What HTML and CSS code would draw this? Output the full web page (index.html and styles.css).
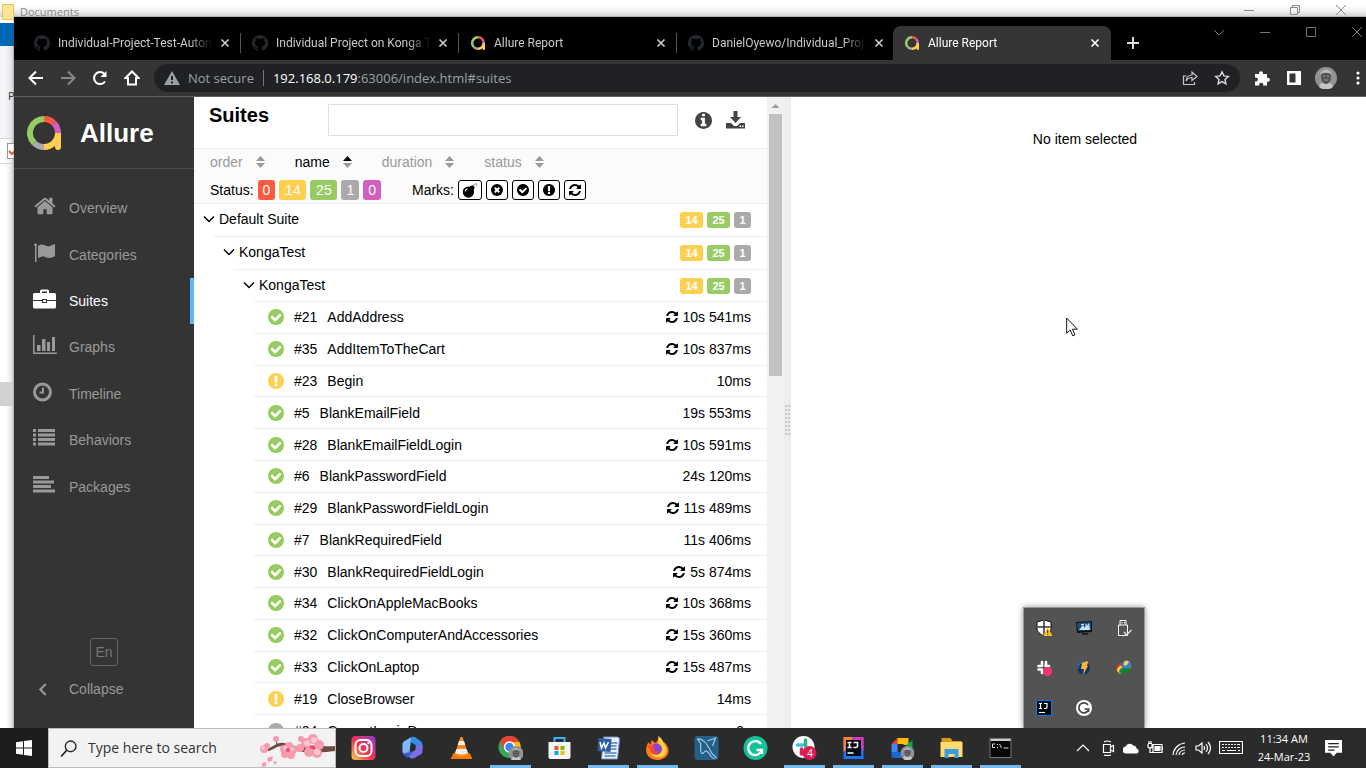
FILE: index.html
```html
<!DOCTYPE html>
<html lang="en">
<head>
<meta charset="utf-8">
<meta name="viewport" content="width=device-width, initial-scale=1">
<title>Allure Report</title>
<link rel="stylesheet" href="styles.css">
</head>
<body>
<svg class="sprite" aria-hidden="true">
  <symbol id="github" viewBox="0 0 16 16"><path d="M8 0C3.58 0 0 3.58 0 8c0 3.54 2.29 6.53 5.47 7.59.4.07.55-.17.55-.38 0-.19-.01-.82-.01-1.49-2.01.37-2.53-.49-2.69-.94-.09-.23-.48-.94-.82-1.13-.28-.15-.68-.52-.01-.53.63-.01 1.08.58 1.23.82.72 1.21 1.87.87 2.33.66.07-.52.28-.87.51-1.07-1.78-.2-3.64-.89-3.64-3.95 0-.87.31-1.59.82-2.15-.08-.2-.36-1.02.08-2.12 0 0 .67-.21 2.2.82a7.6 7.6 0 0 1 4 0c1.53-1.04 2.2-.82 2.2-.82.44 1.1.16 1.92.08 2.12.51.56.82 1.27.82 2.15 0 3.07-1.87 3.75-3.65 3.95.29.25.54.73.54 1.48 0 1.07-.01 1.93-.01 2.2 0 .21.15.46.55.38A8 8 0 0 0 16 8c0-4.42-3.58-8-8-8z"/></symbol>
  <symbol id="allure" viewBox="0 0 34 34"><g fill="none" stroke-width="6"><path stroke="#97cc64" d="M7.100 26.900A14 14 0 0 1 17 3"/><path stroke="#fd5a3e" d="M17 3A14 14 0 0 1 26.900 7.100"/><path stroke="#d35ebe" d="M26.900 7.100A14 14 0 0 1 31 17"/><path stroke="#ffd050" d="M31 17A14 14 0 0 1 17 31"/><path stroke="#aaa" d="M17 31A14 14 0 0 1 7.100 26.900"/></g><path fill="#ffd050" d="M28 17h6v14a3 3 0 0 1-6 0z"/></symbol>
  <symbol id="close" viewBox="0 0 10 10"><path d="M1.500 1.500l7 7M8.500 1.500l-7 7" fill="none" stroke="currentColor" stroke-width="1.700"/></symbol>
  <symbol id="refresh" viewBox="0 0 1792 1792"><path d="M1639 1056q0 5-1 7-64 268-268 434.500t-478 166.500q-146 0-282.500-55t-243.500-157l-129 129q-19 19-45 19t-45-19-19-45v-448q0-26 19-45t45-19h448q26 0 45 19t19 45-19 45l-137 137q71 66 161 102t187 36q134 0 250-65t186-179q11-17 53-117 8-23 30-23h192q13 0 22.500 9.500t9.500 22.500zm25-800v448q0 26-19 45t-45 19h-448q-26 0-45-19t-19-45 19-45l138-138q-148-137-349-137-134 0-250 65t-186 179q-11 17-53 117-8 23-30 23h-199q-13 0-22.500-9.500t-9.500-22.500v-7q65-268 270-434.500t480-166.500q146 0 284 55.500t245 156.500l130-129q19-19 45-19t45 19 19 45z"/></symbol>
  <symbol id="check" viewBox="128 128 1536 1536"><path d="M1412 734q0-28-18-46l-91-90q-19-19-45-19t-45 19l-408 407-226-226q-19-19-45-19t-45 19l-91 90q-18 18-18 46 0 27 18 45l362 362q19 19 45 19 27 0 46-19l543-543q18-18 18-45zm252 162q0 209-103 385.500t-279.500 279.500-385.500 103-385.500-103-279.500-279.500-103-385.500 103-385.500 279.500-279.500 385.500-103 385.500 103 279.500 279.500 103 385.500z"/></symbol>
  <symbol id="warn" viewBox="128 128 1536 1536"><path d="M896 128q209 0 385.500 103t279.500 279.500 103 385.500-103 385.500-279.500 279.500-385.500 103-385.500-103-279.500-279.500-103-385.500 103-385.500 279.500-279.500 385.500-103zm128 1247v-190q0-14-9-23.500t-22-9.500h-192q-13 0-23 10t-10 23v190q0 13 10 23t23 10h192q13 0 22-9.500t9-23.500zm-2-344l18-621q0-12-10-18-10-8-24-8h-220q-14 0-24 8-10 6-10 18l17 621q0 10 10 17.500t24 7.500h185q14 0 23.500-7.500t10.500-17.500z"/></symbol>
  <symbol id="info" viewBox="128 128 1536 1536"><path d="M1152 1376v-160q0-14-9-23t-23-9h-96v-512q0-14-9-23t-23-9h-320q-14 0-23 9t-9 23v160q0 14 9 23t23 9h96v320h-96q-14 0-23 9t-9 23v160q0 14 9 23t23 9h448q14 0 23-9t9-23zm-128-896v-160q0-14-9-23t-23-9h-192q-14 0-23 9t-9 23v160q0 14 9 23t23 9h192q14 0 23-9t9-23zm640 416q0 209-103 385.500t-279.500 279.500-385.500 103-385.500-103-279.500-279.500-103-385.500 103-385.500 279.500-279.500 385.500-103 385.500 103 279.500 279.500 103 385.500z"/></symbol>
  <symbol id="cross" viewBox="0 0 12 12"><circle cx="6" cy="6" r="6"/><path d="M3.800 3.800l4.400 4.400M8.200 3.800L3.800 8.200" stroke="#fff" stroke-width="2"/></symbol>
  <symbol id="down" viewBox="0 0 12 8"><path d="M1 1.500l5 5 5-5" fill="none" stroke="currentColor" stroke-width="1.500"/></symbol>
  <symbol id="face" viewBox="0 0 22 22"><circle cx="11" cy="11" r="11" fill="#929292"/><path d="M4 20c1-4 4-5 7-5s6 1 7 5a11 11 0 0 1-14 0z" fill="#c5c5c5"/><path d="M6 9c0-8 10-8 10 0 0 5-2 8-5 8S6 14 6 9z" fill="#555"/><path d="M5 8c1-7 11-7 12 0-3-3-9-3-12 0z" fill="#bbb"/><path d="M8 9h2M12 9h2M9 13h4" stroke="#999"/></symbol>
</svg>

<div class="desktop">
  <div class="docs">
    <div class="docs-title"><svg class="folder" viewBox="0 0 13 16"><path d="M.5.500h11v10h1v5H.5z" fill="#ffe59a" stroke="#e6c153"/></svg><span>Documents</span>
      <div class="docs-controls">
        <svg viewBox="0 0 12 12"><path d="M1 6.500h10"/></svg>
        <svg viewBox="0 0 12 12"><path d="M1.500 3.500h7v7h-7zM3.500 3.500v-2h7v7h-2"/></svg>
        <svg viewBox="0 0 12 12"><path d="M1 1l10 10M11 1L1 11"/></svg>
      </div>
    </div>
    <div class="docs-side"><div class="docs-blue"></div><div class="docs-ribbon">P</div><div class="docs-path"><svg viewBox="0 0 14 16"><rect x=".5" y=".5" width="13" height="15" fill="#fff" stroke="#999"/><path d="M2 8l3 3 6-6" fill="none" stroke="#e0622a" stroke-width="2"/></svg></div><div class="docs-row"></div></div>
  </div>

  <div class="browser">
    <div class="tabs">
      <div class="tab"><svg class="fav gh"><use href="#github"/></svg><span class="tab-title">Individual-Project-Test-Auton</span><button class="tab-close" aria-label="Close tab"><svg><use href="#close"/></svg></button></div>
      <div class="tab"><svg class="fav gh"><use href="#github"/></svg><span class="tab-title">Individual Project on Konga T</span><button class="tab-close" aria-label="Close tab"><svg><use href="#close"/></svg></button></div>
      <div class="tab"><svg class="fav"><use href="#allure"/></svg><span class="tab-title">Allure Report</span><button class="tab-close" aria-label="Close tab"><svg><use href="#close"/></svg></button></div>
      <div class="tab last"><svg class="fav gh"><use href="#github"/></svg><span class="tab-title">DanielOyewo/Individual_Proj</span><button class="tab-close" aria-label="Close tab"><svg><use href="#close"/></svg></button></div>
      <div class="tab active"><svg class="fav"><use href="#allure"/></svg><span class="tab-title">Allure Report</span><button class="tab-close" aria-label="Close tab"><svg><use href="#close"/></svg></button></div>
      <button class="new-tab" aria-label="New tab"><svg viewBox="0 0 12 12"><path d="M6 0v12M0 6h12" stroke="#ddd" stroke-width="2"/></svg></button>
      <div class="win-controls">
        <button aria-label="Search tabs"><svg viewBox="0 0 12 12"><path d="M1 4l5 5 5-5"/></svg></button>
        <button aria-label="Minimize"><svg viewBox="0 0 12 12"><path d="M1 6.500h10"/></svg></button>
        <button aria-label="Maximize"><svg viewBox="0 0 12 12"><path d="M1.500 1.500h9v9h-9z"/></svg></button>
        <button aria-label="Close"><svg viewBox="0 0 12 12"><path d="M1 1l10 10M11 1L1 11"/></svg></button>
      </div>
    </div>
    <div class="toolbar">
      <button aria-label="Back"><svg viewBox="0 0 16 16"><path d="M15 8H2M8 1.500L1.500 8 8 14.500" fill="none" stroke="#fff" stroke-width="2"/></svg></button>
      <button aria-label="Forward"><svg viewBox="0 0 16 16"><path d="M1 8h13M8 1.500L14.500 8 8 14.500" fill="none" stroke="#888" stroke-width="2"/></svg></button>
      <button aria-label="Reload"><svg viewBox="0 0 16 16"><path d="M13 11.500A6 6 0 1 1 12.500 4" fill="none" stroke="#fff" stroke-width="2"/><path d="M14.500 1v6h-6z" fill="#fff"/></svg></button>
      <button aria-label="Home"><svg viewBox="0 0 16 16"><path d="M8 1.500L1.500 8H4v6.500h8V8h2.500z" fill="none" stroke="#fff" stroke-width="2"/></svg></button>
      <div class="omnibox">
        <svg class="insecure" viewBox="0 0 16 14"><path d="M8 0l8 14H0z" fill="#9aa0a6"/><path d="M8 5v4M8 10.500v2" stroke="#202124" stroke-width="2"/></svg>
        <span class="not-secure">Not secure</span>
        <span class="url"><b>192.168.0.179</b>:63006/index.html#suites</span>
        <svg class="share" viewBox="0 0 16 16"><path d="M4.500 6H1.500v8.500h11V12M4 11c.5-4 3-6 6-6V2l5 4.500-5 4v-3c-2.500 0-4.500 1-6 3.500z" fill="none" stroke="#c4c7c5" stroke-width="1.200"/></svg>
        <svg class="star" viewBox="0 0 16 16"><path d="M8 1.800l1.900 4.100 4.400.5-3.300 3 .9 4.400L8 11.600l-3.900 2.200.9-4.400-3.300-3 4.400-.5z" fill="none" stroke="#dadce0" stroke-width="1.400"/></svg>
      </div>
      <div class="ext">
        <button aria-label="Extensions"><svg viewBox="0 0 16 16"><path d="M1 4h4.200a2 2 0 1 1 3.600 0H13v4a2 2 0 1 1 0 3.600V15.500H9.200a2.100 2.100 0 1 0-4 0H1v-4.200a2 2 0 1 0 0-3.600z" fill="#fff"/></svg></button>
        <button aria-label="Side panel"><svg viewBox="0 0 16 16"><path d="M1 1h14v14H1zM3.500 3.500v9h6v-9z" fill="#fff" fill-rule="evenodd"/></svg></button>
        <button aria-label="Profile"><svg class="avatar"><use href="#face"/></svg></button>
        <button aria-label="Menu"><svg viewBox="0 0 16 16"><g fill="#fff"><circle cx="8" cy="3" r="1.600"/><circle cx="8" cy="8" r="1.600"/><circle cx="8" cy="13" r="1.600"/></g></svg></button>
      </div>
    </div>

    <div class="page">
      <aside class="side">
        <div class="brand"><svg><use href="#allure"/></svg><span>Allure</span></div>
        <nav class="nav">
          <a href="#overview"><svg viewBox="0 128 1792 1536"><path d="M1472 992v480q0 26-19 45t-45 19h-384v-384h-256v384h-384q-26 0-45-19t-19-45v-480q0-1 .5-3t.5-3l575-474 575 474q1 2 1 6zm223-69l-62 74q-8 9-21 11h-3q-13 0-21-7l-692-577-692 577q-12 8-24 7-13-2-21-11l-62-74q-8-10-7-23.500t11-21.500l719-599q32-26 76-26t76 26l244 204v-195q0-14 9-23t23-9h192q14 0 23 9t9 23v408l219 182q10 8 11 21.500t-7 23.500z"/></svg>Overview</a>
          <a href="#categories"><svg viewBox="0 0 24 20"><path d="M1 2a1.500 1.500 0 1 1 2.500 1v16H2V3zM5 3c6-4 8 2 12 0l5-2v12c-5 3-7 2-10 1-2-1-4 0-7 1z"/></svg>Categories</a>
          <a href="#suites" class="on"><svg viewBox="0 0 24 20"><path d="M7 4V2a1.500 1.500 0 0 1 1.500-1.500h6A1.500 1.500 0 0 1 16 2v2h5.500A1.500 1.500 0 0 1 23 5.500V11h-9v-1H9v1H0V5.500A1.500 1.500 0 0 1 1.500 4zM9 4h5V2.500H9zM0 12h9v2h5v-2h9v6a1.500 1.500 0 0 1-1.500 1.500h-20A1.500 1.500 0 0 1 0 18zM10 11h3v2h-3z" fill-rule="evenodd"/></svg>Suites</a>
          <a href="#graphs"><svg viewBox="0 0 24 20"><path d="M0 0h1.500v17.500H24V19H0zM4 10h3.500v6H4zM9 4h3.500v12H9zM14 7h3v9h-3zM19 2h3v14h-3z"/></svg>Graphs</a>
          <a href="#timeline"><svg viewBox="0 0 24 20"><circle cx="9.500" cy="10" r="8" fill="none" stroke="currentColor" stroke-width="3"/><path d="M9 5.500h2v6H6.500v-2H9z"/></svg>Timeline</a>
          <a href="#behaviors"><svg viewBox="0 0 24 20"><path d="M0 1h3v3H0zM5 1h17v3H5zM0 5.500h3v3H0zM5 5.500h17v3H5zM0 10h3v3H0zM5 10h17v3H5zM0 14.500h3v3H0zM5 14.500h17v3H5z"/></svg>Behaviors</a>
          <a href="#packages"><svg viewBox="0 0 24 20"><path d="M0 1h16v3H0zM0 5.500h21v3H0zM0 10h18v3H0zM0 14.500h22v3H0z"/></svg>Packages</a>
        </nav>
        <div class="side-foot"><button class="lang">En</button><button class="collapse"><svg viewBox="0 0 8 12"><path d="M7 1L2 6l5 5" fill="none" stroke="currentColor" stroke-width="2"/></svg>Collapse</button></div>
      </aside>

      <main class="suites">
        <header class="suites-head">
          <h1>Suites</h1>
          <input type="text" aria-label="Search suites">
          <button aria-label="Information"><svg><use href="#info"/></svg></button>
          <button aria-label="Download CSV"><svg class="dl" viewBox="0 0 19 18"><path d="M7.500 0h4v6H15l-5.500 6L4 6h3.500zM0 12h5l3 3h3l3-3h5v5.500H0zM13.500 14.500v1.500H15v-1.500zM16 14.500v1.500h1.500v-1.500z" fill-rule="evenodd"/></svg></button>
        </header>
        <section class="controls">
          <div class="sorters">
            <button>order<svg viewBox="0 0 9 12"><path d="M0 5L4.500 0 9 5z"/><path d="M0 7h9l-4.500 5z"/></svg></button>
            <button class="sorted">name<svg viewBox="0 0 9 12"><path d="M0 5L4.500 0 9 5z"/><path d="M0 7h9l-4.500 5z" fill="#999"/></svg></button>
            <button>duration<svg viewBox="0 0 9 12"><path d="M0 5L4.500 0 9 5z"/><path d="M0 7h9l-4.500 5z"/></svg></button>
            <button>status<svg viewBox="0 0 9 12"><path d="M0 5L4.500 0 9 5z"/><path d="M0 7h9l-4.500 5z"/></svg></button>
          </div>
          <div class="filters">
            <span>Status:</span>
            <button class="chip failed">0</button><button class="chip broken two">14</button><button class="chip passed two">25</button><button class="chip skipped">1</button><button class="chip unknown">0</button>
            <span class="marks">Marks:</span>
            <button class="mark wide" aria-label="Flaky"><svg viewBox="0 0 14 14"><circle cx="6" cy="8.500" r="5.300"/><path d="M7 3l3-1 2 2-1.500 3z"/><path d="M10.500 2.500l1-1.500M12 1h2v2" fill="none" stroke="#888"/><path d="M3 8q0-2 2-2.500" fill="none" stroke="#fff"/></svg></button>
            <button class="mark" aria-label="New failed"><svg><use href="#cross"/></svg></button>
            <button class="mark" aria-label="New passed"><svg><use href="#check"/></svg></button>
            <button class="mark" aria-label="New broken"><svg><use href="#warn"/></svg></button>
            <button class="mark" aria-label="Retries"><svg viewBox="128 128 1536 1536"><use href="#refresh" width="1792" height="1792"/></svg></button>
          </div>
        </section>
        <div class="tree">
          <div class="groups">
            <div class="group l1"><button><svg><use href="#down"/></svg>Default Suite</button><span class="badges"><i class="broken two">14</i><i class="passed two">25</i><i class="skipped">1</i></span></div>
            <div class="group l2"><button><svg><use href="#down"/></svg>KongaTest</button><span class="badges"><i class="broken two">14</i><i class="passed two">25</i><i class="skipped">1</i></span></div>
            <div class="group l3"><button><svg><use href="#down"/></svg>KongaTest</button><span class="badges"><i class="broken two">14</i><i class="passed two">25</i><i class="skipped">1</i></span></div>
          </div>
          <ul class="tests">
            <li><a href="#t21"><svg class="st ok"><use href="#check"/></svg><span>#21</span><span>AddAddress</span><span class="time"><svg><use href="#refresh"/></svg>10s 541ms</span></a></li>
            <li><a href="#t35"><svg class="st ok"><use href="#check"/></svg><span>#35</span><span>AddItemToTheCart</span><span class="time"><svg><use href="#refresh"/></svg>10s 837ms</span></a></li>
            <li><a href="#t23"><svg class="st bad"><use href="#warn"/></svg><span>#23</span><span>Begin</span><span class="time">10ms</span></a></li>
            <li><a href="#t5"><svg class="st ok"><use href="#check"/></svg><span>#5</span><span>BlankEmailField</span><span class="time">19s 553ms</span></a></li>
            <li><a href="#t28"><svg class="st ok"><use href="#check"/></svg><span>#28</span><span>BlankEmailFieldLogin</span><span class="time"><svg><use href="#refresh"/></svg>10s 591ms</span></a></li>
            <li><a href="#t6"><svg class="st ok"><use href="#check"/></svg><span>#6</span><span>BlankPasswordField</span><span class="time">24s 120ms</span></a></li>
            <li><a href="#t29"><svg class="st ok"><use href="#check"/></svg><span>#29</span><span>BlankPasswordFieldLogin</span><span class="time"><svg><use href="#refresh"/></svg>11s 489ms</span></a></li>
            <li><a href="#t7"><svg class="st ok"><use href="#check"/></svg><span>#7</span><span>BlankRequiredField</span><span class="time">11s 406ms</span></a></li>
            <li><a href="#t30"><svg class="st ok"><use href="#check"/></svg><span>#30</span><span>BlankRequiredFieldLogin</span><span class="time"><svg><use href="#refresh"/></svg>5s 874ms</span></a></li>
            <li><a href="#t34"><svg class="st ok"><use href="#check"/></svg><span>#34</span><span>ClickOnAppleMacBooks</span><span class="time"><svg><use href="#refresh"/></svg>10s 368ms</span></a></li>
            <li><a href="#t32"><svg class="st ok"><use href="#check"/></svg><span>#32</span><span>ClickOnComputerAndAccessories</span><span class="time"><svg><use href="#refresh"/></svg>15s 360ms</span></a></li>
            <li><a href="#t33"><svg class="st ok"><use href="#check"/></svg><span>#33</span><span>ClickOnLaptop</span><span class="time"><svg><use href="#refresh"/></svg>15s 487ms</span></a></li>
            <li><a href="#t19"><svg class="st bad"><use href="#warn"/></svg><span>#19</span><span>CloseBrowser</span><span class="time">14ms</span></a></li>
            <li><a href="#t24"><svg class="st skip"><use href="#check"/></svg><span>#24</span><span>CorrectLoginDo</span><span class="time">0s</span></a></li>
          </ul>
        </div>
      </main>
      <div class="scroll"><svg viewBox="0 0 17 17"><path d="M4.500 11L8.500 7l4 4z" fill="#9a9a9a"/></svg><div class="thumb"></div></div>
      <div class="gutter"><div class="grip"></div></div>
      <section class="detail"><p>No item selected</p>
        <svg class="cursor" viewBox="0 0 12 20"><path d="M.7 1v15.300l3.500-3.300 2.500 5.800 2.300-1-2.500-5.600h4.900z" fill="#fff" stroke="#111"/></svg>
      </section>
    </div>
  </div>

  <div class="tray-pop">
    <svg viewBox="0 0 16 16"><path d="M8 0l7 2v6c0 4-3 6-7 8-4-2-7-4-7-8V2z" fill="#fff" stroke="#111"/><path d="M8 1v14M1.500 7h13" stroke="#333" stroke-width="1.500"/><path d="M11.500 7l5 9h-9z" fill="#ffc20e"/><path d="M11.700 10v3M11.700 14v1" stroke="#222"/></svg>
    <svg viewBox="0 0 16 16"><path d="M0 2l16-1v11L1 13z" fill="#111"/><path d="M1 3l14-1v8L2 11z" fill="#1d4d7a"/><path d="M3 10l4-5 2 3 4-5 1 7z" fill="#b8e6fa"/><path d="M5 5l3-1M10 4v4" stroke="#fff"/><path d="M6 13h6v2H6z" fill="#222"/></svg>
    <svg viewBox="0 0 16 16"><path d="M4 5V.500h6V5M2.500 5h9v10.500h-9zM6 2v1.500M8.500 2v1.500" fill="none" stroke="#fff"/><path d="M8 12l2.500 3 5-5" fill="none" stroke="#ddd" stroke-width="1.500"/></svg>
    <svg viewBox="0 0 16 16"><g stroke="#fff" stroke-width="2.600" stroke-linecap="round"><path d="M6 2v4M10 2v3M2.500 6H4M9.500 6H13M2.500 9.500H6M6 10v3"/></g><circle cx="11.500" cy="11.500" r="4.500" fill="#ff2f74"/></svg>
    <svg viewBox="0 0 16 16"><circle cx="7.500" cy="8" r="6.500" fill="#12316d"/><path d="M2 9a6 6 0 0 1 6-7" fill="none" stroke="#3a6cb0" stroke-width="1.500"/><path d="M6 3l5-2 1 1-1 4h1L7 15l1-6H5z" fill="#ffb52c"/></svg>
    <svg viewBox="0 0 16 16"><path d="M0 10C0 2 7 2 10 5v4L3 13z" fill="#dc302c"/><path d="M1 11c0-6 6-6 9-4l-6 7z" fill="#ffd42a"/><path d="M3 12c0-4 3-5 6-4l-4 5z" fill="#2f7fd0"/><circle cx="10.500" cy="5.500" r="5" fill="#3b83be"/><path d="M8 2c2-2 4-1 5 0l-2 3-3 1z" fill="#ead46b"/><path d="M7 8l9 1-8 6-1-3-4 1z" fill="#12851f"/></svg>
    <svg viewBox="0 0 16 16"><path d="M.5.500h15v15H.5z" fill="#050505" stroke="#087cfa"/><path d="M3 3.500h3M4.500 3.500v5M3 8.500h3M8 3.500h3v4q0 1-2 1H8M3 12.500h6" fill="none" stroke="#fff" stroke-width="1.200"/></svg>
    <svg viewBox="0 0 16 16"><circle cx="8" cy="8" r="8" fill="#fff"/><path d="M12 5a5 5 0 1 0 .7 4H8.500m4 0v3" fill="none" stroke="#444" stroke-width="1.700"/></svg>
  </div>
</div>

<footer class="taskbar">
  <button class="start" aria-label="Start"><svg viewBox="0 0 16 16"><path d="M0 2.200l7-1v6.300H0zM8 1l8-1v7.500H8zM0 8.500h7v6.300l-7-1zM8 8.500h8V16l-8-1z" fill="#fff"/></svg></button>
  <label class="search"><svg viewBox="0 0 16 16"><path d="M6.500 9.500L1 15.500" stroke="#222" stroke-width="1.500"/><circle cx="10" cy="6" r="5" fill="none" stroke="#222" stroke-width="1.300"/></svg><input type="text" placeholder="Type here to search" aria-label="Type here to search">
    <svg class="blossom" viewBox="0 0 76 38"><path d="M8 20c8-3 10-7 17-6 9 1 12 6 22 4 12-3 18 0 29-1v5c-12 2-22 1-31 1-12 0-14-6-22-6-6 0-8 4-14 5z" fill="#6d4a42"/><path d="M18 16l-1-6" stroke="#6d4a42"/><g fill="#f79aae"><circle cx="5" cy="20" r="4"/><circle cx="8" cy="17" r="3"/><circle cx="17" cy="10" r="3"/><circle cx="25" cy="20" r="4"/><circle cx="30" cy="17" r="4"/><circle cx="34" cy="21" r="4"/><circle cx="32" cy="26" r="4"/><circle cx="26" cy="25" r="4"/><circle cx="42" cy="10" r="3"/><circle cx="41" cy="19" r="4"/><circle cx="47" cy="14" r="5"/><circle cx="54" cy="10" r="5"/><circle cx="60" cy="16" r="5"/><circle cx="58" cy="24" r="5"/><circle cx="50" cy="23" r="5"/></g><g fill="#ffc5d0"><circle cx="4" cy="19" r="2"/><circle cx="26" cy="19" r="2"/><circle cx="33" cy="20" r="2"/><circle cx="48" cy="14" r="3"/><circle cx="55" cy="11" r="3"/><circle cx="58" cy="23" r="3"/></g><g fill="#e94e72"><circle cx="29" cy="21" r="2"/><circle cx="53" cy="18" r="2"/></g><path d="M8 29l6-2-1 5-4 1zM3 34l4-1v4l-4 1zM14 32l4 1-2 3z" fill="#f79aae"/></svg>
  </label>
  <div class="apps">
    <button aria-label="Instagram"><svg viewBox="0 0 24 24"><defs><linearGradient id="ig" x1="0" y1="1" x2="1" y2="0"><stop offset="0" stop-color="#ffd14f"/><stop offset=".45" stop-color="#f2354d"/><stop offset="1" stop-color="#8b3ac8"/></linearGradient></defs><rect width="24" height="24" rx="4" fill="url(#ig)"/><rect x="4" y="4" width="16" height="16" rx="5" fill="none" stroke="#fff" stroke-width="2"/><circle cx="12" cy="12" r="4" fill="none" stroke="#fff" stroke-width="2"/><circle cx="17" cy="7" r="1.200" fill="#fff"/></svg></button>
    <button aria-label="Microsoft 365"><svg viewBox="0 0 24 24"><path d="M11 1L4 5q-2 1-2 3v8q0 3 4 2l4-2V8z" fill="#80b7ff"/><path d="M11 1q3-1 5 1l4 3q2 1 2 4v4l-7-4-5-3z" fill="#318ee4"/><path d="M22 9v6q0 3-3 4l-5 3q-2 1-4 0l-7-4 12-6V9z" fill="#7a6fe8"/><path d="M2 15c0 3 5 3 8 1l5-3-8 9-4-3z" fill="#345ec6"/><path d="M10 9l5 1v4l-4 2-2-1z" fill="#2b2b2c"/></svg></button>
    <button aria-label="VLC"><svg viewBox="0 0 24 24"><path d="M4 17h16l3 6H1z" fill="#f17a00"/><path d="M11 1h2l6 18q-7 3-14 0z" fill="#ff8c18"/><path d="M9.500 5h5l1.300 4H8.200zM7 13h10l1.500 4q-6.500 3-13 0z" fill="#eee"/></svg></button>
    <button class="run" aria-label="Chrome"><svg viewBox="0 0 24 24"><circle cx="11" cy="11" r="11" fill="#34a853"/><path d="M1.500 5.500A11 11 0 0 1 21 6H11l-5 8z" fill="#ea4335"/><path d="M21 6a11 11 0 0 1-10 16l5-9-2-7z" fill="#fbbc04"/><circle cx="11" cy="11" r="5" fill="#4285f4" stroke="#fff" stroke-width="1.500"/><use href="#face" x="10" y="10" width="15" height="15"/></svg></button>
    <button aria-label="Store"><svg viewBox="0 0 24 24"><path d="M7 6V2h10v4" fill="none" stroke="#35b7f1" stroke-width="2"/><path d="M1 6h22v15a2 2 0 0 1-2 2H3a2 2 0 0 1-2-2z" fill="#f5f5f5"/><path d="M7 10h4v4H7z" fill="#f25022"/><path d="M13 10h4v4h-4z" fill="#7fba00"/><path d="M7 15h4v4H7z" fill="#00a4ef"/><path d="M13 15h4v4h-4z" fill="#ffb900"/></svg></button>
    <button class="run" aria-label="Word"><svg viewBox="0 0 24 24"><path d="M7 1h14q2 0 2 3l-2 19H5z" fill="#eaf1fb" stroke="#6c8dbd"/><path d="M14 7h7M14 10h6M14 13h6M8 17h12M8 20h11" stroke="#507fbe" stroke-width="1.500"/><path d="M2 2l13 1-1 13-13-1z" fill="#2e5ca5"/><path d="M3.500 6L5 12l2.500-5L9 12l3-6" fill="none" stroke="#fff" stroke-width="1.500"/></svg></button>
    <button class="run" aria-label="Firefox"><svg viewBox="0 0 24 24"><path d="M13 0c1 4 4 5 5 9l1-3c10 12-1 18-7 18C3 24-3 16 3 6l2 3 1-5 4 3c2-2 3-4 3-7z" fill="#ff7a19"/><path d="M13 0c5 4 5 7 7 10 5 11-9 15-15 8 11 3 13-5 8-9z" fill="#ffd13b"/><circle cx="11" cy="13" r="5.500" fill="#8247d8"/><path d="M1 10c3-1 5 1 9 0-3 5 0 6 4 5-4 6-9 2-9-2z" fill="#ff433f"/></svg></button>
    <button aria-label="MySQL Workbench"><svg viewBox="0 0 24 24"><rect width="24" height="24" rx="3" fill="#255f87"/><path d="M20 23c-6-3-4-6-8-8-3-1-2 4-5 2-2-2 0-6-1-10L3 3c8-1 12 10 14 14l5 5M13 5l8-3-3 8" fill="none" stroke="#a4cadd" stroke-width="1.200"/></svg></button>
    <button aria-label="Grammarly"><svg viewBox="0 0 24 24"><circle cx="12" cy="12" r="12" fill="#15c39a"/><path d="M17.500 8a7 7 0 1 0 1 6H13m5.500 0v4" fill="none" stroke="#fff" stroke-width="2.300"/></svg></button>
    <button class="run" aria-label="Slack"><svg viewBox="0 0 24 24"><circle cx="11" cy="11" r="11" fill="#fff"/><g stroke-width="3.500" stroke-linecap="round"><path d="M5 9h5" stroke="#36c5f0"/><path d="M13 4v6" stroke="#2eb67d"/><path d="M13 13h5" stroke="#ecb22e"/><path d="M9 13v5" stroke="#e01e5a"/></g><circle cx="17" cy="17" r="7" fill="#d91c53"/></svg><span class="count">4</span></button>
    <button class="run" aria-label="IntelliJ IDEA"><svg viewBox="0 0 24 24"><path d="M2 1h20v22H2z" fill="#1676f2"/><path d="M2 1h10L4 14l-2 2z" fill="#ff8333"/><path d="M10 1h12v14z" fill="#db35bd"/><path d="M4.500 4h15v16h-15z" fill="#080812"/><path d="M6 6.500h4M8 6.500v5M6 11.500h4M12 6.500h4v4q0 1-4 1M6 17h6" fill="none" stroke="#fff" stroke-width="1.500"/></svg></button>
    <button class="run" aria-label="Google Meet"><svg viewBox="0 0 24 24"><path d="M1 8l6-6v6z" fill="#ea4335"/><path d="M1 8h6v8H1z" fill="#4285f4"/><path d="M7 2h11v7h-5v-1H7z" fill="#fbbc04"/><path d="M1 16h11v6H3q-2 0-2-2z" fill="#1967d2"/><path d="M16 9l6-5v15l-6-3z" fill="#00ac47"/><use href="#face" x="10" y="10" width="14" height="14"/></svg></button>
    <button class="run" aria-label="File Explorer"><svg viewBox="0 0 24 24"><path d="M2 2h9l2 3h9v5H2z" fill="#d99a18"/><path d="M1 6h22v15H1z" fill="#ffdb70"/><path d="M5 13h14v9h-4v-4H9v4H5z" fill="#3f9bdf"/></svg></button>
    <button class="run" aria-label="Command Prompt"><svg viewBox="0 0 24 24"><path d="M1.500 2.500h21v19h-21z" fill="#070707" stroke="#777"/><path d="M2 3h20v2H2z" fill="#ccc"/><path d="M6.500 8H4v3.500h2.500M9 8v1M9 11v1M11 8l2 4M15 12h5" fill="none" stroke="#ddd"/></svg></button>
  </div>
  <div class="tray">
    <svg viewBox="0 0 16 16"><path d="M2 11l6-6 6 6"/></svg>
    <svg viewBox="0 0 16 16"><path d="M4.500 4.500h7v8h-7zM11.500 7l3-1.500v6l-3-1.500M5 2q3-2 7 0M5 15q3 1 7 0"/></svg>
    <svg viewBox="0 0 16 16"><path d="M3 13a3 3 0 0 1 0-6 4 4 0 0 1 7-1 3 3 0 0 1 3 3 2 2 0 0 1 0 4z" fill="#fff"/></svg>
    <svg viewBox="0 0 16 16"><path d="M6 4.500h9v8H6zM15.500 7v3M1 3.500h4M2 1v2.500M4 1v2.500M1 4v3q2 2 4 0V4M3 8v4.500h3"/><path d="M8 6.500h5v4H8z" fill="#fff"/></svg>
    <svg viewBox="0 0 16 16"><path d="M2 15A13 13 0 0 1 14 3M5 15a9 9 0 0 1 9-8M8 15a6 6 0 0 1 6-5M11 15a3 3 0 0 1 3-2"/></svg>
    <svg viewBox="0 0 16 16"><path d="M1 6h2.500L7 3v10l-3.500-3H1zM9 6q1 2 0 4M11 4q3 4 0 8M13 2q5 6 0 12"/></svg>
    <svg class="kbd" viewBox="0 0 24 14"><path d="M.5.500h23v12H.5zM3 3.500h18M3 6.500h18M3 9.500h3M8 9.500h9M19 9.500h2"/><path d="M5.500 2v6M8.500 2v6M11.500 2v6M14.500 2v6M17.500 2v6" stroke="#2b2b2c"/></svg>
    <time class="clock"><span>11:34 AM</span><span>24-Mar-23</span></time>
    <svg class="note" viewBox="0 0 16 16"><path d="M0 0h16v12h-5l-3 3.500L5 12H0z" fill="#fff" stroke="none"/><path d="M3 3.500h10M3 6.500h10M3 9.500h6" stroke="#222"/></svg>
  </div>
</footer>
</body>
</html>
```
FILE: styles.css
```css
* { box-sizing: border-box; }
body { margin: 0; height: 100vh; display: flex; flex-direction: column; overflow: hidden; background: #fff; color: #000; font: 14px/20px "Liberation Sans", Arial, sans-serif; }
button { border: 0; padding: 0; margin: 0; background: none; font: inherit; color: inherit; display: flex; align-items: center; justify-content: center; }
svg { flex: none; display: block; fill: currentColor; }
a { color: inherit; text-decoration: none; }
.sprite { position: absolute; width: 0; height: 0; }

.desktop { position: relative; flex: 1; min-height: 0; overflow: hidden; }
.docs { height: 100%; display: flex; flex-direction: column; font-family: "Open Sans", "Noto Sans", sans-serif; }
.docs-title { display: flex; align-items: center; height: 23px; padding-left: 2px; gap: 5px; font-size: 11px; color: #8a8a8a; background: linear-gradient(#fff 5px, #f0f0f0 11px, #d0d0d0 17px, #fff 17px); }
.folder { width: 13px; height: 16px; }
.docs-controls { margin-left: auto; display: flex; gap: 34px; padding: 0 19px 4px 0; }
.docs-controls svg { width: 12px; height: 12px; fill: none; stroke: #888; }
.docs-side { flex: 1; width: 14px; background: linear-gradient(90deg, #fff 5px, #eee 10px, #ccc); }
.docs-blue { height: 23px; background: #0067b4; }
.docs-ribbon { height: 93px; padding: 40px 0 0 8px; overflow: hidden; background: linear-gradient(90deg, #f3f5f8 5px, #e6e8ea 10px, #cdcfd1); border-bottom: 1px solid #d5d5d5; font-size: 11px; color: #333; }
.docs-path { height: 25px; padding: 4px 0 0 7px; overflow: hidden; border-bottom: 1px solid #d5d5d5; }
.docs-path svg { width: 14px; height: 16px; }
.docs-row { height: 24px; margin-top: 218px; background: #d2d2d2; }

.browser { position: absolute; inset: 17px 0 0 14px; display: flex; flex-direction: column; background: #353535; box-shadow: 0 0 1px #333; }
.tabs { height: 43px; flex: none; display: flex; align-items: flex-end; padding-left: 9px; background: #000; font: 12px/20px Roboto, "Open Sans", sans-serif; color: #c8cacc; }
.tab { position: relative; display: flex; align-items: center; flex: 0 1 218px; min-width: 0; height: 34px; padding: 0 11px; gap: 8px; }
.tab::after { content: ""; position: absolute; right: 0; top: 7px; height: 20px; width: 1px; background: #555; }
.tab.last::after, .tab.active::after { display: none; }
.tab.active { background: #353535; border-radius: 8px 8px 0 0; color: #fff; margin-left: -2px; }
.fav { width: 16px; height: 16px; padding: 1px; }
.fav.gh { padding: 0; color: #24292f; }
.tab-title { flex: 1; min-width: 0; overflow: hidden; white-space: nowrap; mask-image: linear-gradient(90deg, #000 85%, transparent); }
.tab-close svg { width: 10px; height: 10px; }
.new-tab { width: 44px; height: 34px; }
.new-tab svg { width: 12px; height: 12px; }
.win-controls { margin: 0 0 22px auto; display: flex; gap: 34px; padding-right: 3px; }
.win-controls svg { width: 12px; height: 12px; fill: none; stroke: #777; }
.toolbar { height: 37px; flex: none; display: flex; align-items: center; padding-left: 6px; border-bottom: 1px solid #606060; font: 13px/20px "Open Sans", "Noto Sans", sans-serif; }
.toolbar button { width: 32px; height: 32px; }
.toolbar svg { width: 16px; height: 16px; }
.omnibox { flex: 1; display: flex; align-items: center; height: 28px; margin-left: 6px; padding: 0 10px; border-radius: 14px; background: #202124; color: #9aa0a6; }
.omnibox .insecure { height: 14px; margin-right: 8px; }
.not-secure { padding-right: 9px; border-right: 1px solid #777; line-height: 16px; }
.url { flex: 1; padding-left: 9px; }
.url b { font-weight: 400; color: #fff; }
.share { margin-right: 16px; }
.ext { display: flex; padding-left: 6px; margin-right: -8px; }
.toolbar .avatar { width: 22px; height: 22px; }

.page { flex: 1; min-height: 0; display: flex; background: #fff; }
.side { width: 180px; flex: none; display: flex; flex-direction: column; background: #343434; color: #999; }
.brand { height: 72px; display: flex; align-items: center; gap: 19px; padding-left: 13px; border-bottom: 1px solid #4c4c4c; color: #fff; font-weight: 700; font-size: 26px; line-height: 30px; }
.brand svg { width: 34px; height: 34px; }
.nav { display: grid; grid-template-rows: repeat(7, 1fr); height: 325px; margin-top: 16px; }
.nav a { display: flex; align-items: center; gap: 12px; padding-left: 19px; border-right: 4px solid transparent; }
.nav svg { width: 24px; height: 20px; margin-bottom: 4px; }
.nav .on { color: #fff; border-color: #64b5f6; }
.side-foot { margin-top: auto; padding-bottom: 29px; }
.lang { width: 28px; height: 28px; margin: 0 0 13px 76px; border: 1px solid #666; border-radius: 3px; color: #777; }
.collapse { gap: 22px; padding-left: 24px; }
.collapse svg { width: 9px; height: 13px; }

.suites { flex: 0 1 573px; min-width: 0; display: flex; flex-direction: column; overflow: hidden; }
.suites-head { height: 52px; flex: none; display: flex; align-items: center; padding: 0 22px 5px 15px; border-bottom: 1px solid #eee; color: #444; }
h1 { margin: 0 auto 11px 0; font-size: 20px; line-height: 24px; color: #000; }
.suites-head input { width: 350px; height: 32px; margin-right: 17px; border: 1px solid #e0e0e0; background: #fff; font: inherit; }
.suites-head svg { width: 17px; height: 17px; }
.suites-head .dl { width: 19px; height: 18px; margin-left: 14px; }
.controls { height: 55px; flex: none; padding: 3px 0 0 16px; background: #fbfbfb; border-bottom: 1px solid #eee; }
.sorters { display: flex; gap: 30px; height: 20px; color: #999; }
.sorters button { gap: 13px; }
.sorters svg { width: 9px; height: 12px; }
.sorters .sorted { color: #000; }
.filters { display: flex; align-items: center; gap: 4px; margin-top: 8px; }
.chip { height: 20px; padding: 0 5px; border-radius: 3px; color: #fff; }
.chip.two { width: 27px; }
.failed { background: #fd5a3e; }
.broken { background: #ffd050; }
.passed { background: #97cc64; }
.skipped { background: #aaa; }
.unknown { background: #d35ebe; }
.marks { margin-left: 27px; }
.mark { width: 22px; height: 20px; border: 1px solid #000; border-radius: 3px; background: #fff; }
.mark.wide { width: 24px; }
.mark svg { width: 12px; height: 12px; }
.mark.wide svg { width: 15px; height: 15px; }
.tree { flex: 1; min-height: 0; overflow: hidden; }
.groups { display: grid; grid-template-rows: 33px 33px 32px; }
.group { display: flex; align-items: center; justify-content: space-between; padding-right: 16px; border-bottom: 1px solid #eee; }
.group button { gap: 4px; margin: 0 0 2px -11px; }
.group svg { width: 12px; height: 8px; }
.l1 { margin-left: 20px; }
.l2 { margin-left: 40px; }
.l3 { margin-left: 60px; }
.badges { display: flex; gap: 4px; }
.badges i { width: 17px; height: 16px; border-radius: 3px; color: #fff; font: 700 11px/16px "Liberation Sans", Arial, sans-serif; text-align: center; }
.badges i.two { width: 23px; }
.tests { display: grid; grid-auto-rows: 1fr; height: 445px; margin: 0 0 0 60px; padding: 0; list-style: none; }
.tests li { border-bottom: 1px solid #eee; }
.tests a { display: flex; align-items: center; gap: 10px; height: 100%; padding: 0 16px 0 14px; }
.st { width: 16px; height: 16px; }
.ok { color: #97cc64; }
.bad { color: #ffd050; }
.skip { color: #aaa; }
.time { display: flex; align-items: center; gap: 4px; margin-left: auto; }
.time svg { width: 14px; height: 14px; }
.scroll { width: 17px; flex: none; background: #f1f1f1; }
.scroll svg { width: 17px; height: 17px; }
.thumb { width: 13px; height: 262px; margin-left: 2px; background: #c1c1c1; }
.gutter { width: 7px; flex: none; display: flex; align-items: center; justify-content: center; padding-top: 14px; background: #eaeef1; }
.grip { width: 5px; height: 30px; background: repeating-linear-gradient(transparent 0 2px, #eaeef1 2px 4px), repeating-linear-gradient(90deg, #c6cacd 0 2px, #eaeef1 2px 3px); }
.detail { position: relative; flex: 1; min-width: 0; }
.detail p { margin: 32px 0 0; padding-left: 13px; text-align: center; }
.cursor { position: absolute; left: 275px; top: 220px; width: 12px; height: 20px; }

.tray-pop { position: absolute; right: 221px; bottom: 0; width: 122px; height: 121px; display: grid; grid-template-columns: repeat(3, 40px); grid-auto-rows: 40px; place-items: center; background: #535353; border: 1px solid #999; border-bottom: 0; box-shadow: 0 0 6px #0006; }
.tray-pop svg { width: 16px; height: 16px; }

.taskbar { height: 40px; flex: none; display: flex; background: #2b2b2c; color: #fff; font-family: "Open Sans", "Noto Sans", sans-serif; }
.start { width: 48px; background: #1d1d1e; }
.start svg { width: 16px; height: 16px; }
.search { width: 288px; display: flex; align-items: center; padding-left: 11px; gap: 11px; border: 1px solid #bbb; background: #f2f2f2; overflow: hidden; }
.search svg { width: 17px; height: 17px; }
.search input { flex: 1; min-width: 0; padding: 0; border: 0; background: none; outline: 0; font: 14px/20px "Open Sans", "Noto Sans", sans-serif; }
.search input::placeholder { color: #333; opacity: 1; }
.search .blossom { width: 76px; height: 38px; }
.apps { display: flex; padding-left: 3px; }
.apps button { position: relative; width: 49px; border-bottom: 3px solid transparent; padding-top: 3px; }
.apps svg { width: 25px; height: 24px; }
.run::after { content: ""; position: absolute; left: 4px; right: 4px; bottom: -3px; height: 3px; background: #76b9ed; }
.count { position: absolute; left: 25px; top: 16px; width: 10px; font-size: 10px; line-height: 18px; text-align: center; }
.tray { margin-left: auto; display: flex; align-items: center; gap: 8px; padding-right: 24px; }
.tray svg { width: 16px; height: 16px; fill: none; stroke: #fff; stroke-width: 1.2; }
.tray .kbd { width: 24px; height: 14px; }
.tray .note { width: 17px; height: 17px; }
.clock { display: flex; flex-direction: column; align-items: center; width: 66px; font-size: 11px; line-height: 18px; white-space: nowrap; }
```
